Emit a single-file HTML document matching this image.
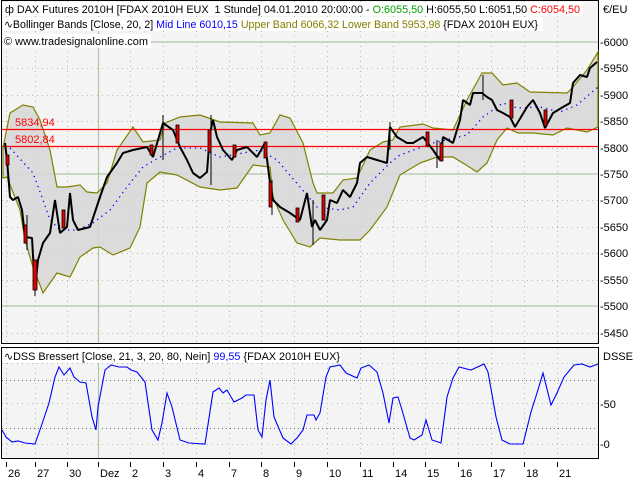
<!DOCTYPE html>
<html><head><meta charset="utf-8"><style>
html,body{margin:0;padding:0;background:#fff;width:640px;height:480px;overflow:hidden}
svg{display:block;font-family:"Liberation Sans",sans-serif;font-size:11px}
</style></head><body>
<svg width="640" height="480" viewBox="0 0 640 480" xmlns="http://www.w3.org/2000/svg">
<rect x="0" y="0" width="640" height="480" fill="#fff"/>
<rect x="1.5" y="0.5" width="597" height="343" fill="#f4f4f4" stroke="#000"/>
<g stroke="#a8c0a0" stroke-dasharray="1,4" stroke-width="1">
<line x1="2" y1="68.5" x2="598" y2="68.5"/><line x1="2" y1="95.5" x2="598" y2="95.5"/><line x1="2" y1="121.5" x2="598" y2="121.5"/><line x1="2" y1="148.5" x2="598" y2="148.5"/><line x1="2" y1="200.5" x2="598" y2="200.5"/><line x1="2" y1="227.5" x2="598" y2="227.5"/><line x1="2" y1="253.5" x2="598" y2="253.5"/><line x1="2" y1="280.5" x2="598" y2="280.5"/><line x1="2" y1="333.5" x2="598" y2="333.5"/>
<line x1="6.5" y1="1" x2="6.5" y2="343"/><line x1="35.5" y1="1" x2="35.5" y2="343"/><line x1="67.5" y1="1" x2="67.5" y2="343"/><line x1="130.5" y1="1" x2="130.5" y2="343"/><line x1="163.5" y1="1" x2="163.5" y2="343"/><line x1="196.5" y1="1" x2="196.5" y2="343"/><line x1="229.5" y1="1" x2="229.5" y2="343"/><line x1="261.5" y1="1" x2="261.5" y2="343"/><line x1="294.5" y1="1" x2="294.5" y2="343"/><line x1="327.5" y1="1" x2="327.5" y2="343"/><line x1="360.5" y1="1" x2="360.5" y2="343"/><line x1="393.5" y1="1" x2="393.5" y2="343"/><line x1="425.5" y1="1" x2="425.5" y2="343"/><line x1="458.5" y1="1" x2="458.5" y2="343"/><line x1="491.5" y1="1" x2="491.5" y2="343"/><line x1="524.5" y1="1" x2="524.5" y2="343"/><line x1="557.5" y1="1" x2="557.5" y2="343"/>
</g>
<g stroke="#b0c4a8" stroke-width="1.2">
<line x1="2" y1="42" x2="598" y2="42"/><line x1="2" y1="174" x2="598" y2="174"/><line x1="2" y1="306" x2="598" y2="306"/><line x1="98.5" y1="1" x2="98.5" y2="343"/>
</g>
<polygon fill="#d8d8d8" fill-opacity="0.9" stroke="#808000" stroke-width="1.2" points="3,148 10,113 23,105 33,107 40,120 50,150 57,187 67,187 80,185 87,192 97,193 107,183 117,150 133,127 143,142 160,140 165,123 180,117 200,115 220,122 253,123 260,135 270,133 280,115 290,118 303,143 313,183 317,193 333,193 343,180 357,178 370,150 383,142 393,140 400,127 423,124 433,128 453,130 467,100 482,73 492,73 503,85 517,83 530,92 567,93 573,87 587,70 598,52 598,127 587,132 567,128 553,135 533,133 518,133 507,128 497,140 487,163 477,172 463,163 453,157 437,157 420,163 400,175 387,207 370,230 360,240 340,240 320,238 310,247 297,243 283,220 273,197 270,167 253,165 237,188 220,190 200,187 177,175 160,172 147,183 140,227 130,248 113,255 100,247 93,248 80,257 70,277 57,273 50,283 43,293 33,267 25,240 20,210 7,177 3,178"/>
<polyline fill="none" stroke="#0000ff" stroke-width="1.3" stroke-dasharray="1.3,4" points="10,148 33,173 43,200 50,220 60,230 77,230 93,223 110,210 127,187 143,167 160,157 177,148 200,148 220,157 260,150 277,160 300,187 317,207 340,210 353,207 370,183 390,163 400,155 433,143 467,135 483,117 503,103 517,108 540,107 560,112 577,105 598,87"/>
<line x1="2" y1="129.5" x2="598" y2="129.5" stroke="#ff0000" stroke-width="1.3"/>
<line x1="2" y1="146.5" x2="598" y2="146.5" stroke="#ff0000" stroke-width="1.3"/>
<text x="15" y="126" fill="#ff0000">5834,94</text>
<text x="15" y="143" fill="#ff0000">5802,84</text>
<polyline fill="none" stroke="#000" stroke-width="2" stroke-linejoin="bevel" points="5,143 7,160 10,197 13,200 18,197 22,210 25,237 32,238 35,290 38,260 43,243 50,233 55,200 60,233 67,227 70,193 73,220 78,230 90,227 100,197 107,177 117,163 123,153 133,150 147,147 153,157 163,123 173,130 180,147 187,160 193,173 200,178 207,172 210,133 213,120 217,137 223,150 232,160 237,150 247,147 257,157 265,143 270,183 273,200 280,207 290,213 300,220 307,193 312,227 315,220 320,230 327,220 330,200 337,203 343,190 350,197 357,183 360,163 367,157 377,160 387,163 390,127 397,137 407,143 413,143 423,137 433,150 440,160 443,137 453,143 460,120 463,100 470,105 473,93 482,93 487,97 492,100 497,110 503,113 510,117 515,127 527,107 533,100 540,113 545,128 553,113 563,107 570,103 573,83 580,75 587,77 590,68 597,62"/>
<g stroke="#000" stroke-width="1">
<line x1="35" y1="275" x2="35" y2="296"/><line x1="211" y1="115" x2="211" y2="185"/><line x1="313" y1="200" x2="313" y2="245"/><line x1="27" y1="215" x2="27" y2="250"/><line x1="163" y1="115" x2="163" y2="160"/><line x1="272" y1="180" x2="272" y2="215"/><line x1="390" y1="122" x2="390" y2="150"/><line x1="483" y1="75" x2="483" y2="100"/><line x1="437" y1="140" x2="437" y2="168"/>
</g>
<g fill="#e00000" stroke="#000" stroke-width="0.8">
<rect x="33" y="260" width="4" height="30"/><rect x="24" y="225" width="3" height="18"/><rect x="176" y="125" width="3" height="18"/><rect x="208" y="130" width="3" height="22"/><rect x="269" y="182" width="3" height="25"/><rect x="322" y="195" width="3" height="25"/><rect x="426" y="132" width="3" height="14"/><rect x="440" y="143" width="3" height="18"/><rect x="510" y="100" width="3" height="18"/><rect x="544" y="110" width="3" height="16"/><rect x="150" y="145" width="3" height="10"/><rect x="264" y="142" width="3" height="16"/><rect x="296" y="208" width="3" height="14"/><rect x="6" y="155" width="3" height="10"/><rect x="62" y="210" width="3" height="18"/><rect x="233" y="145" width="3" height="12"/>
</g>
<rect x="3" y="2" width="580" height="14" fill="#fff"/>
<rect x="3" y="17" width="540" height="14" fill="#fff"/>
<rect x="3" y="34" width="148" height="14" fill="#fff"/>
<text x="5" y="13" fill="#000" textLength="575" lengthAdjust="spacingAndGlyphs">ф DAX Futures 2010H [FDAX 2010H EUX&#160; 1 Stunde] 04.01.2010 20:00:00 - <tspan fill="#00a000">O:6055,50</tspan> H:6055,50 L:6051,50 <tspan fill="#ff0000">C:6054,50</tspan></text>
<text x="4" y="28" fill="#000" textLength="534" lengthAdjust="spacingAndGlyphs">∿Bollinger Bands [Close, 20, 2] <tspan fill="#0000ff">Mid Line 6010,15</tspan> <tspan fill="#808000">Upper Band 6066,32 Lower Band 5953,98</tspan> {FDAX 2010H EUX}</text>
<text x="4" y="45" fill="#000" textLength="144" lengthAdjust="spacingAndGlyphs">© www.tradesignalonline.com</text>
<text x="603" y="13" fill="#000">€/EU</text>
<g fill="#000"><text x="600" y="46">-6000</text><text x="600" y="72">-5950</text><text x="600" y="99">-5900</text><text x="600" y="125">-5850</text><text x="600" y="152">-5800</text><text x="600" y="178">-5750</text><text x="600" y="204">-5700</text><text x="600" y="231">-5650</text><text x="600" y="257">-5600</text><text x="600" y="284">-5550</text><text x="600" y="310">-5500</text><text x="600" y="337">-5450</text></g>
<rect x="1.5" y="347.5" width="597" height="111" fill="#f4f4f4" stroke="#000"/>
<g stroke="#a8c0a0" stroke-dasharray="1,4">
<line x1="2" y1="363.5" x2="598" y2="363.5"/><line x1="2" y1="444.5" x2="598" y2="444.5"/><line x1="2" y1="403.5" x2="598" y2="403.5"/>
<line x1="6.5" y1="348" x2="6.5" y2="458"/><line x1="35.5" y1="348" x2="35.5" y2="458"/><line x1="67.5" y1="348" x2="67.5" y2="458"/><line x1="130.5" y1="348" x2="130.5" y2="458"/><line x1="163.5" y1="348" x2="163.5" y2="458"/><line x1="196.5" y1="348" x2="196.5" y2="458"/><line x1="229.5" y1="348" x2="229.5" y2="458"/><line x1="261.5" y1="348" x2="261.5" y2="458"/><line x1="294.5" y1="348" x2="294.5" y2="458"/><line x1="327.5" y1="348" x2="327.5" y2="458"/><line x1="360.5" y1="348" x2="360.5" y2="458"/><line x1="393.5" y1="348" x2="393.5" y2="458"/><line x1="425.5" y1="348" x2="425.5" y2="458"/><line x1="458.5" y1="348" x2="458.5" y2="458"/><line x1="491.5" y1="348" x2="491.5" y2="458"/><line x1="524.5" y1="348" x2="524.5" y2="458"/><line x1="557.5" y1="348" x2="557.5" y2="458"/>
</g>
<line x1="2" y1="380.5" x2="598" y2="380.5" stroke="#707070" stroke-dasharray="1,3"/>
<line x1="2" y1="428.5" x2="598" y2="428.5" stroke="#707070" stroke-dasharray="1,3"/>
<line x1="98.5" y1="348" x2="98.5" y2="458" stroke="#b0c4a8" stroke-width="1.2"/>
<polyline fill="none" stroke="#0000ff" stroke-width="1.1" points="2,430 6,437 12,442 18,441 25,443 35,444 41,427 49,403 55,377 59,367 64,375 70,368 74,377 80,382 86,383 92,417 96,430 98,407 105,370 111,365 119,367 127,367 131,370 137,372 145,382 152,430 158,440 162,423 167,393 172,407 180,440 189,443 205,444 213,392 219,388 223,393 227,390 234,402 242,398 246,395 254,395 258,430 262,437 266,400 270,380 274,417 283,438 291,444 297,438 303,430 307,415 314,415 316,420 320,413 326,377 330,367 340,365 346,373 357,378 361,368 369,365 377,372 383,393 389,423 393,398 398,397 402,410 410,438 414,440 422,435 426,420 432,440 441,443 447,397 453,378 459,367 471,370 484,364 488,372 496,417 502,440 510,444 523,444 531,412 537,393 543,373 551,405 557,393 564,377 574,365 582,364 590,367 598,364"/>
<rect x="3" y="349" width="338" height="14" fill="#fff"/>
<text x="4" y="360" fill="#000" textLength="336" lengthAdjust="spacingAndGlyphs">∿DSS Bressert [Close, 21, 3, 20, 80, Nein] <tspan fill="#0000ff">99,55</tspan> {FDAX 2010H EUX}</text>
<text x="603" y="360" fill="#000">DSSE</text>
<text x="600" y="408" fill="#000">-50</text>
<text x="600" y="448" fill="#000">-0</text>
<g stroke="#000"><line x1="6.5" y1="462" x2="6.5" y2="467"/><line x1="35.5" y1="462" x2="35.5" y2="467"/><line x1="67.5" y1="462" x2="67.5" y2="467"/><line x1="98.5" y1="462" x2="98.5" y2="467"/><line x1="130.5" y1="462" x2="130.5" y2="467"/><line x1="163.5" y1="462" x2="163.5" y2="467"/><line x1="196.5" y1="462" x2="196.5" y2="467"/><line x1="229.5" y1="462" x2="229.5" y2="467"/><line x1="261.5" y1="462" x2="261.5" y2="467"/><line x1="294.5" y1="462" x2="294.5" y2="467"/><line x1="327.5" y1="462" x2="327.5" y2="467"/><line x1="360.5" y1="462" x2="360.5" y2="467"/><line x1="393.5" y1="462" x2="393.5" y2="467"/><line x1="425.5" y1="462" x2="425.5" y2="467"/><line x1="458.5" y1="462" x2="458.5" y2="467"/><line x1="491.5" y1="462" x2="491.5" y2="467"/><line x1="524.5" y1="462" x2="524.5" y2="467"/><line x1="557.5" y1="462" x2="557.5" y2="467"/></g>
<g fill="#000"><text x="8" y="477">26</text><text x="37" y="477">27</text><text x="69" y="477">30</text><text x="100" y="477">Dez</text><text x="132" y="477">2</text><text x="165" y="477">3</text><text x="198" y="477">4</text><text x="231" y="477">7</text><text x="263" y="477">8</text><text x="296" y="477">9</text><text x="329" y="477">10</text><text x="362" y="477">11</text><text x="395" y="477">14</text><text x="427" y="477">15</text><text x="460" y="477">16</text><text x="493" y="477">17</text><text x="526" y="477">18</text><text x="559" y="477">21</text></g>
</svg>
</body></html>
